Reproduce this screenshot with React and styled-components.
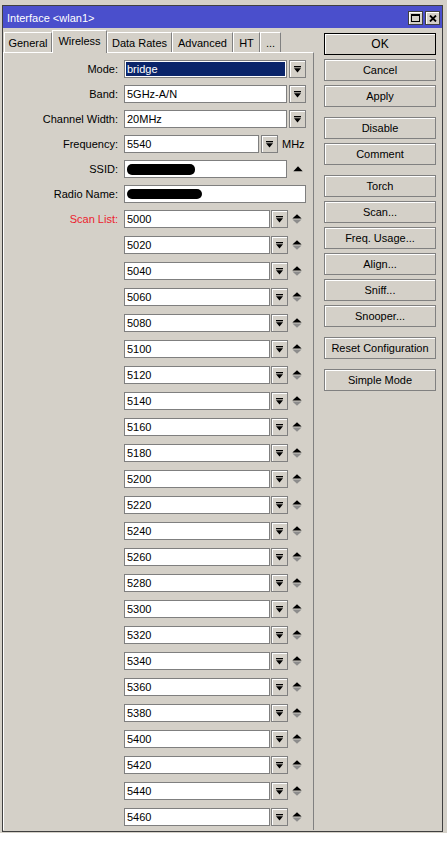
import React from 'react'
import styled, { createGlobalStyle } from 'styled-components'

const GlobalStyle = createGlobalStyle`
  body {
    margin: 0;
    background: #ffffff;
    font-family: "Liberation Sans", Arial, sans-serif;
    font-size: 11px;
    color: #000;
  }
`

const scanList = Array.from({ length: 24 }, (_, i) => String(5000 + i * 20))

const tabs = [
  { name: 'General', w: 48 },
  { name: 'Wireless', w: 55, active: true },
  { name: 'Data Rates', w: 65 },
  { name: 'Advanced', w: 61 },
  { name: 'HT', w: 27 },
  { name: '...', w: 21 },
]

const buttonGroups = [
  ['OK', 'Cancel', 'Apply'],
  ['Disable', 'Comment'],
  ['Torch', 'Scan...', 'Freq. Usage...', 'Align...', 'Sniff...', 'Snooper...'],
  ['Reset Configuration'],
  ['Simple Mode'],
]

const DropIcon = () => (
  <svg width="7" height="7" viewBox="0 0 7 7">
    <rect x="0" y="0" width="7" height="1.3" fill="#000" />
    <polygon points="0,2.2 7,2.2 3.5,6.6" fill="#000" />
  </svg>
)

const SpinIcon = () => (
  <svg width="10" height="10" viewBox="0 0 10 10">
    <polygon points="5,0.2 9.6,4.6 0.4,4.6" fill="#000" />
    <polygon points="0.4,5.4 9.6,5.4 5,9.8" fill="#8c8c8c" />
  </svg>
)

const UpIcon = () => (
  <svg width="10" height="6" viewBox="0 0 10 6">
    <polygon points="5,0.3 9.7,5.3 0.3,5.3" fill="#000" />
  </svg>
)

const Dropdown = () => (
  <DropButton>
    <DropIcon />
  </DropButton>
)

const App = () => {
  return (
    <>
      <GlobalStyle />
      <Page>
        <Window>
          <TitleBar>
            <TitleText>Interface &lt;wlan1&gt;</TitleText>
            <TitleButtons>
              <TitleButton>
                <svg width="9" height="8" viewBox="0 0 9 8">
                  <rect x="0.5" y="0.5" width="8" height="7" fill="none" stroke="#000" />
                  <rect x="0" y="0" width="9" height="2" fill="#000" />
                </svg>
              </TitleButton>
              <TitleButton>
                <svg width="8" height="7" viewBox="0 0 8 7">
                  <path d="M1 0.5 L7 6.5 M7 0.5 L1 6.5" stroke="#000" strokeWidth="1.8" />
                </svg>
              </TitleButton>
            </TitleButtons>
          </TitleBar>

          <WindowBody>
            <LeftCol>
              <TabRow>
                {tabs.map((t) => (
                  <Tab key={t.name} $w={t.w} $active={t.active}>
                    {t.name}
                  </Tab>
                ))}
              </TabRow>

              <Panel>
                <TopRows>
                  <Row>
                    <Label>Mode:</Label>
                    <Field $w={163}>
                      <Value $selected>bridge</Value>
                    </Field>
                    <Gap $w={2} />
                    <Dropdown />
                  </Row>
                  <Row>
                    <Label>Band:</Label>
                    <Field $w={163}>
                      <Value>5GHz-A/N</Value>
                    </Field>
                    <Gap $w={2} />
                    <Dropdown />
                  </Row>
                  <Row>
                    <Label>Channel Width:</Label>
                    <Field $w={163}>
                      <Value>20MHz</Value>
                    </Field>
                    <Gap $w={2} />
                    <Dropdown />
                  </Row>
                  <Row>
                    <Label>Frequency:</Label>
                    <Field $w={135}>
                      <Value>5540</Value>
                    </Field>
                    <Gap $w={2} />
                    <Dropdown />
                    <Unit>MHz</Unit>
                  </Row>
                  <Row>
                    <Label>SSID:</Label>
                    <Field $w={163}>
                      <Value>
                        <Redact $w={68} $h={11} />
                      </Value>
                    </Field>
                    <Gap $w={6} />
                    <UpIcon />
                  </Row>
                  <Row>
                    <Label>Radio Name:</Label>
                    <Field $w={182}>
                      <Value>
                        <Redact $w={75} $h={10} />
                      </Value>
                    </Field>
                  </Row>
                </TopRows>

                <ScanRows>
                  {scanList.map((f, i) => (
                    <Row key={f}>
                      <Label $red>{i === 0 ? 'Scan List:' : ''}</Label>
                      <Field $w={146}>
                        <Value>{f}</Value>
                      </Field>
                      <Gap $w={1} />
                      <Dropdown />
                      <Gap $w={4} />
                      <SpinIcon />
                    </Row>
                  ))}
                </ScanRows>
              </Panel>
            </LeftCol>

            <RightCol>
              {buttonGroups.map((group, gi) => (
                <ButtonGroup key={gi}>
                  {group.map((b) => (
                    <Button key={b} $default={b === 'OK'}>
                      {b}
                    </Button>
                  ))}
                </ButtonGroup>
              ))}
            </RightCol>
          </WindowBody>
        </Window>
      </Page>
    </>
  )
}

export default App

const Page = styled.div`
  height: 833px;
  box-sizing: border-box;
  padding: 5px 0 0 2px;
  background: #d4d0c8;
`

const Window = styled.div`
  width: 441px;
  height: 827px;
  box-sizing: border-box;
  border: 1px solid #404040;
  background: #d4d0c8;
  display: flex;
  flex-direction: column;
  overflow: hidden;
`

const TitleBar = styled.div`
  height: 22px;
  flex-shrink: 0;
  background: #4a4fcc;
  display: flex;
  align-items: center;
  justify-content: space-between;
  padding: 0 2px 0 4px;
`

const TitleText = styled.span`
  color: #ffffff;
  font-size: 11px;
  padding-top: 1px;
`

const TitleButtons = styled.div`
  display: flex;
  gap: 2px;
  padding-top: 2px;
`

const TitleButton = styled.div`
  width: 15px;
  height: 14px;
  box-sizing: border-box;
  background: #d4d0c8;
  border: 1px solid #404040;
  box-shadow: inset 1px 1px 0 #ffffff;
  display: flex;
  align-items: center;
  justify-content: center;
`

const WindowBody = styled.div`
  flex: 1;
  display: flex;
  min-height: 0;
`

const LeftCol = styled.div`
  width: 311px;
  display: flex;
  flex-direction: column;
  padding-top: 2px;
  padding-bottom: 1px;
`

const TabRow = styled.div`
  height: 22px;
  display: flex;
  align-items: flex-end;
  padding-left: 1px;
`

const Tab = styled.div`
  position: relative;
  z-index: ${(p) => (p.$active ? 2 : 0)};
  width: ${(p) => p.$w}px;
  height: ${(p) => (p.$active ? 23 : 20)}px;
  margin-bottom: ${(p) => (p.$active ? -1 : 0)}px;
  box-sizing: border-box;
  background: #d4d0c8;
  border-top: 1px solid #ffffff;
  border-left: 1px solid #ffffff;
  border-right: 1px solid #808080;
  display: flex;
  align-items: center;
  justify-content: center;
  padding-bottom: ${(p) => (p.$active ? 3 : 0)}px;
  font-size: 11px;
`

const Panel = styled.div`
  position: relative;
  z-index: 1;
  flex: 1;
  box-sizing: border-box;
  border-top: 1px solid #ffffff;
  border-left: 1px solid #ffffff;
  border-right: 1px solid #808080;
  padding-top: 7px;
  overflow: hidden;
`

const TopRows = styled.div`
  display: flex;
  flex-direction: column;
  gap: 7px;
`

const ScanRows = styled.div`
  display: flex;
  flex-direction: column;
  gap: 8px;
  margin-top: 7px;
`

const Row = styled.div`
  height: 18px;
  display: flex;
  align-items: center;
`

const Label = styled.div`
  width: 114px;
  margin-right: 6px;
  text-align: right;
  color: ${(p) => (p.$red ? '#ec1c2e' : '#000')};
  white-space: nowrap;
`

const Field = styled.div`
  width: ${(p) => p.$w}px;
  height: 18px;
  box-sizing: border-box;
  border: 1px solid #7f7f7f;
  background: #ffffff;
  padding: 1px;
  display: flex;
`

const Value = styled.div`
  flex: 1;
  display: flex;
  align-items: center;
  padding-left: 1px;
  line-height: 14px;
  background: ${(p) => (p.$selected ? '#0a246a' : 'transparent')};
  color: ${(p) => (p.$selected ? '#ffffff' : '#000')};
`

const Redact = styled.span`
  display: block;
  width: ${(p) => p.$w}px;
  height: ${(p) => p.$h}px;
  background: #000;
  border-radius: 5px;
`

const Gap = styled.div`
  width: ${(p) => p.$w}px;
  flex-shrink: 0;
`

const DropButton = styled.div`
  width: 17px;
  height: 18px;
  box-sizing: border-box;
  background: #d4d0c8;
  border: 1px solid #808080;
  box-shadow: inset 1px 1px 0 #ffffff;
  display: flex;
  align-items: center;
  justify-content: center;
`

const Unit = styled.span`
  margin-left: 4px;
`

const RightCol = styled.div`
  width: 112px;
  margin: 5px 0 0 10px;
  display: flex;
  flex-direction: column;
  gap: 10px;
`

const ButtonGroup = styled.div`
  display: flex;
  flex-direction: column;
  gap: 4px;
`

const Button = styled.div`
  height: 22px;
  box-sizing: border-box;
  background: #d4d0c8;
  border: 1px solid ${(p) => (p.$default ? '#000000' : '#808080')};
  box-shadow: inset 1px 1px 0 #ffffff;
  display: flex;
  align-items: center;
  justify-content: center;
  font-size: ${(p) => (p.$default ? 12 : 11)}px;
  white-space: nowrap;
  cursor: pointer;
`
